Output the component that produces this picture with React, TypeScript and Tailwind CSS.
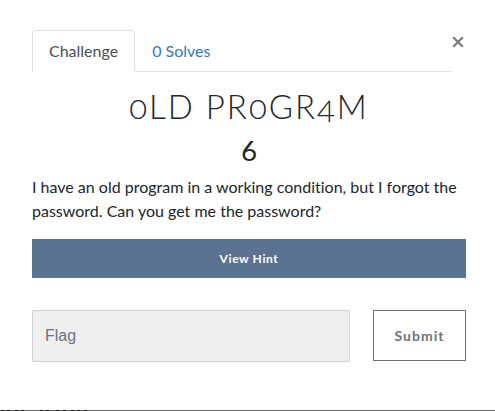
import { useState } from "react";

const edgeMarks = [
  "left-[1px] w-[3px]",
  "left-[7px] w-[3px]",
  "left-[15px] w-[3px]",
  "left-[21px] w-[3px]",
  "left-[40px] w-[3px]",
  "left-[46px] w-[3px]",
  "left-[56px] w-[3px]",
  "left-[63px] w-[3px]",
  "left-[71px] w-[3px]",
  "left-[77px] w-[3px]",
  "left-[84px] w-[3px]",
];

export default function App() {
  const [flag, setFlag] = useState("");
  return (
    <div className="relative flex min-h-screen flex-col bg-white font-['Lato',sans-serif] text-base text-[#212529]">
      <main className="grow pt-[30px] pr-[29px] pb-12 pl-8">
        <div className="flex items-start">
          <nav className="flex grow border-b border-[#dee2e6]">
            <a
              href="#challenge"
              className="-mb-px rounded-t border border-[#dee2e6] border-b-white bg-white px-4 py-2 text-[#495057]"
            >
              Challenge
            </a>
            <a href="#solves" className="-mb-px border border-transparent px-4 py-2 text-[#337ab7]">
              0 Solves
            </a>
          </nav>
          <button aria-label="Close" className="flex w-3.5 shrink-0 pt-1.5">
            <svg viewBox="0 0 12 12" className="size-3 shrink-0" fill="none" stroke="#7b7b7b" strokeWidth="2.3">
              <path d="M1.2 1.2 10.8 10.8M10.8 1.2 1.2 10.8" />
            </svg>
          </button>
        </div>
        <h2 className="mt-3 text-center text-[33px] leading-[44px] font-light tracking-[2px] oldstyle-nums">
          0LD PR0GR4M
        </h2>
        <h3 className="text-center text-[29px] leading-[44px] font-normal oldstyle-nums">6</h3>
        <p className="mt-[3px] leading-6 [font-variant-ligatures:none]">
          I have an old program in a working condition, but I forgot the password. Can you get me the password?
        </p>
        <button className="mt-4 h-[39px] w-full bg-[#5b7290] text-xs font-bold tracking-wider text-white">
          View Hint
        </button>
        <form className="mt-8 flex items-start gap-[23px]" onSubmit={(e) => e.preventDefault()}>
          <input
            aria-label="Flag"
            placeholder="Flag"
            value={flag}
            onChange={(e) => setFlag(e.target.value)}
            className="h-[52px] min-w-0 grow border border-[#ced4da] bg-[#efefef] px-3 font-['Liberation_Sans',sans-serif] text-base outline-none placeholder:text-[#6c757d]"
          />
          <button className="h-[51px] w-[93px] shrink-0 border border-[#6c757d] text-sm font-bold tracking-[1px] text-[#6c757d]">
            Submit
          </button>
        </form>
      </main>
      <div className="relative h-px bg-[#666]">
        {edgeMarks.map((place) => (
          <span key={place} className={`absolute top-0 h-px bg-[#111] ${place}`} />
        ))}
      </div>
    </div>
  );
}
